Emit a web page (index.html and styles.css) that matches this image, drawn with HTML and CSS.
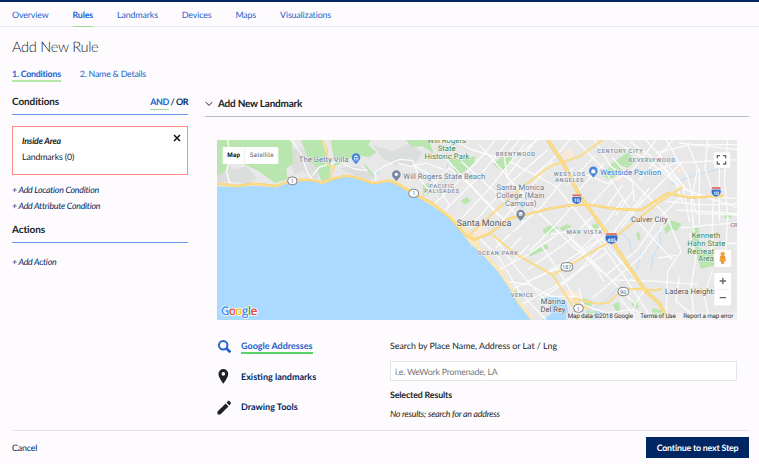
FILE: index.html
```html
<!DOCTYPE html>
<html lang="en">
<head>
<meta charset="utf-8">
<title>Add New Rule</title>
<link rel="stylesheet" href="styles.css">
</head>
<body>
<nav class="nav">
  <a>Overview</a><a class="current">Rules</a><a>Landmarks</a><a>Devices</a><a>Maps</a><a>Visualizations</a>
</nav>
<h1 class="title">Add New Rule</h1>
<div class="steps"><a class="current">1. Conditions</a><a>2. Name &amp; Details</a></div>
<div class="content">
  <aside class="sidebar">
    <div class="section-head"><h2>Conditions</h2><span class="logic"><a class="on">AND</a> / <a>OR</a></span></div>
    <div class="condition">
      <div><div class="condition-name">Inside Area</div><div>Landmarks (0)</div></div>
      <svg class="close" viewBox="0 0 8 8"><path d="M1 1l6 6M7 1L1 7"/></svg>
    </div>
    <a class="add">+ Add Location Condition</a>
    <a class="add">+ Add Attribute Condition</a>
    <div class="section-head actions"><h2>Actions</h2></div>
    <a class="add">+ Add Action</a>
  </aside>
  <main class="main">
    <div class="landmark-head"><svg viewBox="0 0 8 6"><path d="M.8 1.2L4 4.4l3.200-3.200"/></svg><h2>Add New Landmark</h2></div>
    <svg class="map" viewBox="3 6 1560 540">
      <rect class="land" x="3" y="6" width="1560" height="540"/>
      <g class="hill">
        <path d="M3 90l30-15 20 20 40-10 30 35-25 18-60-10-35 8zM215 60l25-35 40 20 40 60-20 20-40-25-25 10zM370 90l60-5 50 30-30 20-40-25zM470 20l60 20 50-25 40 30-30 40-50-5-40-20z"/>
      </g>
      <g class="park">
        <path d="M3 6h225l3 70-20 15 3 32-36 13-38-28-24-15-40-18-73 2zM255 6h60l8 22 22 50-5 47-24 4-14-42-28-30zM345 6h120l-8 15 24 22-20 14-45-5-25 15-35 18zM3 60l35 8-10 30-25 15z"/>
        <path d="M570 6h70l12 40 100 24-14 35-20-3-20-38-40-15-40-25-30 4zM722 92l25-32 32-5-6 20-30 28-24 6zM832 78l24-22 34 3-8 18-26 23zM620 140l17-6 5 30-20 12zM735 188l18-12 10 14-17 10z"/>
        <path d="M1185 78l50-35 25 25-25 22-22-10 10 18-42 27-18-10zM978 275l33-16 17 13-38 18zM1030 270l25-12 12 8-28 14zM933 345l57-28 8 14-56 24zM1125 262l20-7 3 15-16 3zM905 240l15-8 5 10-14 8zM1345 272l20-25 32 10-15 22-18-4-15 13zM1430 270h18v60l42 10 10 42-45 10-25-75zM1525 222h22v17h-22zM1260 286l10-3 5 20-8 5zM1100 480l30 10-6 18-18-3zM1190 500l18-8 5 25-10 7zM1245 492l16-6 7 22-14 6zM1310 510l34 10-3 18-34 2zM885 454l18 4-6 18-14-3zM440 75l12 8 20 28-6 3zM1110 520h40v26h-40zM1300 60l10-4 5 10-12 5z"/>
      </g>
      <g class="built"><path d="M780 262l25 5 15 20-28 12-25-10zM1050 455l28 5 20 18-28 12-20-10zM1385 92l16-2 5 12-20 4zM1200 115l15-3 4 15-16 2zM1035 50l28-20 12 20-17 20zM845 378l14 5 8 22-8 6zM1365 535l20-8 15 19h-30zM1320 180l12-8 10 15-12 6z"/></g>
      <g class="water"><path d="M977 480l45-2 30 14 8 54H980l30-22-25-4 20-17zM1140 516l-8 30h18l12-22z"/><path class="stream" d="M1110 520l50-22 45-48 60-60 10-50M670 180l15-40 12-70M1325 270l10 40-25 48-5 40M1360 140l80-30 90-22M480 98h8v10h-8zM1250 350l-12-45-28-28"/></g>
      <g class="street">
        <path d="M35 6l8 50-12 45 12 40M225 6l30 40 18 55 20 28M480 128l-2-26 28-18 45-20 40 4 20 55 35 42M290 112l20-25 35-10 40-15M385 78l30 15 40 5"/>
        <path d="M590 80l50 30 60 90M625 170l75-80 60 50 90 96M690 62l75 80 115 120M735 70l100 90 90 95M790 20l75 85 85 100 110 110 100 90M652 200l70-65 85-90 30-39M685 218l100-98 95-114M730 248l90-96 110-138M760 270l110-125 125-110"/>
        <path d="M545 75l38 10 50-10 50 20M710 6l60 30 60 18 75-5 60-43M910 6l-45 55 10 60 60 60M880 70l140 75 90 110 115 160 85 131M960 6l-90 112M1080 6l85 90 105 160 100 110M1135 6l50 80 65 45 5 60M1010 70l-85 100-85 100M1070 90l-95 118-85 74M1100 170l-80 90-80 80M1140 225l-90 90-115 80M1185 280l-110 90-140 60M1235 230l-75 95-100 100-90 60M1300 150l-70 85-60 75M1320 6l-70 90-75 40-75-30"/>
        <path d="M770 320l42 43 42 60 60 80M790 300l60 60 60 100 80 86M830 290l75 105 80 90M850 395l85-45 90-60M885 455l85-40 80-45 100-65M915 500l120-65 135-90M870 430l70 10 65 35h80M1005 290l40-8 55 50 65 100M975 320l60 90 40 70M1060 300l90 90 110 110M1120 260l85 100 85 98M1165 415l100-80 60-90 70-70M1185 425l140 5 120 10M1130 480l140-120 70-95M1190 60l70 80 90 90 45 110-40 60-5 130M1240 10l85 60 55 65 20 60"/>
        <path d="M1190 6l100 58 115 90 158 55M1290 6l50 55 60 80 20 110M1350 6l65 110 25 110 123 5M1320 45l100-25 143 0M1280 110l100-35 183-10M1415 20l30 70-20 100 10 100M1475 6l-8 85 25 80-5 170M1535 6l-10 110 10 120-8 150M1350 190l100 10 113-2M1380 216l183 10M1395 270l95-10 73-5M1485 320l78-5M1420 285l20 70-15 90 10 101M1490 395l-25 80 15 71M1325 360l55-8M1090 450l10 50 70 25 80-10 80 31M1210 480l35 40 10 26M1290 450l-30 40-15 56M1390 415l-10 75 70 56M840 330l45-45M865 350l50-50M890 370l50-50M1085 340l35-30 60-70 45-60"/>
        <path d="M1140 50l-85 90M1165 75l-85 90M1060 6l-35 42-70 65M1190 130l-65 70M1220 140l-50 70M1250 160l-50 70M1280 185l-65 85M1370 6l-100 120M1400 70l-60 60-90 90M1340 85l75 70M1390 15l173 20M1380 170l80 5 103 6M1450 90v170M1510 90v160"/>
      </g>
      <path class="beach-line" d="M520 132L545 142 590 169 650 205 700 240 735 280 760 315 790 340 845 400 880 450 905 495 945 546"/>
      <path class="beach" d="M3 143l110-3 68 3 46-16 62-3 31 7 25-10 45-11 40 7 40 13 50-4-50 12-40-14-40-4-45 14-25 12-31-11-62 4-46 18-68-2-110 2zM720 245l40 35 25 20 10 40-35-20z"/>
      <path class="sea" d="M3 145l60 2 50-4 68 5 46-17 62-3 31 11 25-12 45-12 40 7 40 16 50-6 25 10L590 169 650 205 700 240 735 280 760 315 790 340 845 400 880 450 905 495 945 546H3z"/>
      <path class="pier" d="M775 315l-13 13M772 315l-3 10"/>
      <g class="road-edge">
        <path d="M3 136l60 8 50-7 68 7 46-18 50-1 45 9 23-10 45-11 40 8 40 15 50-8 25 10 45 28 60 30 50 42 50 55 25 12 45-18 60-45 50-12 70-18 60-10 60-2 80 13 75 3 80-50 70 13 96-5" class="main"/>
        <path d="M995 6l50 75 45 90 80 110 65 100 55 80 40 35 25 50" class="main freeway"/>
        <path d="M317 6l15 25 4 50 18 6-8 20v17M762 290l75-70 85-75 80-60 90-30 75-55M828 290l75 60 106 60 62 95M1009 412l170-100 145-115 75-50M1071 482l70 15 35-2 43-40 64-3 30 6 25-6M1071 490l50 24" class="minor"/>
      </g>
      <g class="road">
        <path d="M3 136l60 8 50-7 68 7 46-18 50-1 45 9 23-10 45-11 40 8 40 15 50-8 25 10 45 28 60 30 50 42 50 55 25 12 45-18 60-45 50-12 70-18 60-10 60-2 80 13 75 3 80-50 70 13 96-5" class="main"/>
        <path d="M995 6l50 75 45 90 80 110 65 100 55 80 40 35 25 50" class="main freeway"/>
        <path d="M317 6l15 25 4 50 18 6-8 20v17M762 290l75-70 85-75 80-60 90-30 75-55M828 290l75 60 106 60 62 95M1009 412l170-100 145-115 75-50M1071 482l70 15 35-2 43-40 64-3 30 6 25-6M1071 490l50 24" class="minor"/>
      </g>
      <g class="shield">
        <rect x="215" y="117" width="28" height="23" rx="11"/><rect x="578" y="154" width="30" height="24" rx="12"/><rect x="1035" y="374" width="35" height="25" rx="11"/><rect x="1206" y="448" width="32" height="25" rx="12"/><rect x="1073" y="499" width="29" height="24" rx="12"/>
        <text x="229" y="135">1</text><text x="593" y="172">1</text><text x="1052" y="393">187</text><text x="1222" y="467">90</text><text x="1087" y="518">1</text>
      </g>
      <g class="interstate">
        <path d="M1069 176h27q5 17-14 23-18-6-13-23zM1487 154h27q5 17-14 23-18-6-13-23zM1169 291h35q8 20-18 28-24-8-17-28z"/>
        <path class="red" d="M1069 169h27v6h-27zM1487 147h27v6h-27zM1170 285h33v6h-33z"/>
        <text x="1082" y="193">10</text><text x="1500" y="171">10</text><text x="1187" y="311">405</text>
      </g>
      <g class="pins">
        <path class="blue" d="M420 79l-9-11a13 13 0 1 1 18 0z"/><path class="icon" d="M413 57l7-5 7 5zM414 59h3v5h-3zM419 59h3v5h-3zM424 59h3v5h-3zM413 65h15v2h-15z"/>
        <path d="M541 130l-9-11a13 13 0 1 1 18 0z"/><circle class="icon" cx="541" cy="109" r="5"/>
        <path class="blue" d="M1132 119l-9-11a13 13 0 1 1 18 0z"/><path class="icon" d="M1126 97h12v9h-12zM1129 97v-3h6v3h-2v-1h-2v1z"/>
        <path d="M914 249l-9-11a13 13 0 1 1 18 0z"/><path class="icon" d="M906 226l8-4 8 4-8 4zM909 229l5 3 5-3v4h-10z"/>
      </g>
      <g class="label green">
        <text x="692" y="16" textLength="116">Will Rogers</text><text x="692" y="38" textLength="54">State</text><text x="693" y="62" textLength="135">Historic Park</text>
        <text x="1470" y="301" textLength="86">Kenneth</text><text x="1471" y="324" textLength="114">Hahn State</text><text x="1470" y="347" textLength="112">Recreation</text><text x="1470" y="370" textLength="46">Area</text>
      </g>
      <g class="label slate">
        <text x="323" y="71" textLength="149">The Getty Villa</text><text x="685" y="124" textLength="246">Will Rogers State Beach</text>
        <text x="913" y="157" textLength="143">Santa Monica</text><text x="913" y="181" textLength="144">College (Main</text><text x="914" y="204" textLength="94">Campus)</text>
        <text class="bluetext" x="1244" y="111" textLength="183">Westside Pavilion</text>
      </g>
      <g class="label area">
        <text x="898" y="54" textLength="117">BRENTWOOD</text><text x="677" y="150" textLength="74">PACIFIC</text><text x="677" y="166" textLength="104">PALISADES</text>
        <text x="1212" y="45" textLength="136">CENTURY CITY</text><text x="1307" y="71" textLength="139">BEVERLYWOOD</text><text x="1060" y="115" textLength="93">WEST LOS</text><text x="1060" y="131" textLength="85">ANGELES</text>
        <text x="1105" y="288" textLength="105">MAR VISTA</text><text x="845" y="350" textLength="121">OCEAN PARK</text><text x="918" y="478" textLength="67">VENICE</text><text x="1554" y="268">CR</text>
      </g>
      <g class="label city">
        <text class="large" x="804" y="264" textLength="164">Santa Monica</text><text x="1300" y="252" textLength="110">Culver City</text><text x="1011" y="498" textLength="73">Marina</text><text x="1011" y="521" textLength="75">Del Rey</text><text x="1425" y="467" textLength="156">Ladera Heights</text>
      </g>
      <rect class="credit-bg" x="1050" y="524" width="513" height="22"/>
      <g class="credit"><text x="1153" y="539" textLength="196">Map data ©2018 Google</text><text x="1326" y="539" textLength="107">Terms of Use</text><text x="1477" y="539" textLength="150">Report a map error</text></g>
      <text class="google" x="69" y="531" textLength="110"><tspan class="g-blue">G</tspan><tspan class="g-red">o</tspan><tspan class="g-yellow">o</tspan><tspan class="g-blue">g</tspan><tspan class="g-green">l</tspan><tspan class="g-red">e</tspan></text>
      <g class="control">
        <rect x="20" y="27" width="167" height="51" rx="3"/><path class="divider" d="M86 27v51"/>
        <text class="selected" x="53" y="57" textLength="38">Map</text><text x="137" y="57" textLength="72">Satellite</text>
        <rect x="1494" y="43" width="48" height="46" rx="3"/><path class="full" d="M1504 61v-8h8M1521 53h8v8M1529 70v8h-8M1512 78h-8v-8"/>
        <rect x="1495" y="336" width="50" height="51" rx="3"/><path class="person" d="M1513 356q7-6 14 0l2 13h-4l-2 8h-6l-2-8h-4z"/><circle class="person" cx="1520" cy="348" r="6"/><path class="person-line" d="M1513 356q7 5 14 0M1518 370v7"/>
        <rect x="1495" y="405" width="50" height="97" rx="3"/><path class="divider" d="M1502 454h36"/><path class="zoom" d="M1511 429h19M1520.500 419.500v19M1511 479h19"/>
      </g>
    </svg>
    <div class="lookup">
      <div class="sources">
        <a class="current"><svg viewBox="0 0 14 14"><circle cx="6.200" cy="5.700" r="4.200" fill="none" stroke="currentColor" stroke-width="2"/><path d="M9.300 8.800l4 4" stroke="currentColor" stroke-width="2.700"/></svg><span>Google Addresses</span></a>
        <a><svg viewBox="0 0 14 16"><path fill-rule="evenodd" d="M6.300 0a5.200 5.200 0 0 1 5.200 5.200c0 3.800-5.200 10.300-5.200 10.300S1.100 9 1.100 5.200A5.200 5.200 0 0 1 6.300 0zm0 3.300a1.900 1.900 0 1 0 0 3.800 1.900 1.900 0 0 0 0-3.800z"/></svg><span>Existing landmarks</span></a>
        <a><svg viewBox="0 0 14 14"><path d="M.5 11.100l8.100-8.100 2.900 2.900-8.100 8.100H.5zM9.500 2.100L11.200.4q.6-.6 1.200 0l1.300 1.700q.6.600 0 1.200L12.400 5z"/></svg><span>Drawing Tools</span></a>
      </div>
      <div class="search">
        <label for="place">Search by Place Name, Address or Lat / Lng</label>
        <input id="place" placeholder="i.e. WeWork Promenade, LA">
        <strong>Selected Results</strong>
        <em>No results; search for an address</em>
      </div>
    </div>
  </main>
</div>
<footer class="footer"><a>Cancel</a><button>Continue to next Step</button></footer>
</body>
</html>
```
FILE: styles.css
```css
* { box-sizing: border-box; }
body { margin: 0; height: 464px; overflow: hidden; background: #fdfbfd; color: #202124; font: 8.8px/12px Lato, sans-serif; letter-spacing: -.12px; text-rendering: geometricPrecision; }
h1, h2 { margin: 0; }
.nav { height: 27px; border-top: 2px solid #002663; border-bottom: 1px solid #e8e8ea; padding-left: 12px; display: flex; gap: 24px; color: #2462ce; }
.nav a { height: 25px; padding-top: 7px; }
.nav .current { font-weight: 700; border-bottom: 1px solid #9edb91; }
.title { margin: 12px 12px 0; font-size: 14.600px; letter-spacing: -.3px; line-height: 18px; font-weight: 300; }
.steps { margin: 10px 12px 0; height: 15px; display: flex; gap: 19px; color: #2462ce; letter-spacing: -.22px; }
.steps a { padding-top: 1px; height: 15px; }
.steps .current { font-weight: 700; height: 15px; border-bottom: 2px solid #b4e6a8; }
.content { margin: 0 10px 0 12px; display: flex; gap: 17px; height: 348px; }
.sidebar { width: 176px; padding-top: 13px; }
.section-head { height: 20px; display: flex; justify-content: space-between; border-bottom: 1px solid #6796e4; }
h2 { font-size: 10px; line-height: 14px; font-weight: 700; letter-spacing: -.1px; }
.logic { color: #002b6b; padding-top: 1px; height: 15px; font-weight: 700; font-size: 9px; letter-spacing: -.5px; }
.logic .on { color: #2462ce; display: inline-block; border-bottom: 1px solid #9edb91; height: 14px; }
.condition { height: 49px; margin: 11px 0 7px; padding: 7px 6px 0 9px; border: 1px solid #ff8b82; background: white; display: flex; justify-content: space-between; line-height: 16px; }
.condition-name { font-style: italic; font-weight: 700; line-height: 13px; letter-spacing: -.2px; }
.condition-name + div { line-height: 19px; }
.close { width: 8px; height: 8px; fill: none; stroke: #111; stroke-width: 1.500; }
.add { display: block; line-height: 16px; font-style: italic; color: #002663; letter-spacing: -.24px; }
.actions { margin: 9px 0 11px; }
.main { width: 544px; padding-top: 15px; }
.landmark-head { height: 20px; display: flex; gap: 5px; border-bottom: 1px solid #b9bdc0; }
.landmark-head svg { width: 8px; height: 6px; margin-top: 4px; fill: none; stroke: #222; }
.landmark-head h2 { letter-spacing: -.23px; }
.map { display: block; width: 520px; height: 180px; margin: 23px 12px 0; overflow: hidden; letter-spacing: 0; }
.lookup { margin: 0 12px; display: flex; }
.sources { width: 173px; padding-top: 11px; font-size: 9px; letter-spacing: 0; }
.sources a { display: flex; align-items: center; gap: 10px; height: 30.500px; font-weight: 700; color: #002663; }
.sources svg { width: 14px; height: 15px; fill: #202124; }
.sources .current, .sources .current svg { color: #2462ce; }
.sources .current span { border-bottom: 2px solid #5ad46a; padding-top: 2px; }
.search { width: 347px; padding-top: 20px; }
.search label { display: block; letter-spacing: 0; }
.search input { display: block; width: 347px; height: 20px; margin: 9px 0 8px; padding: 0 4px; border: 1px solid #e5e5e9; background: white; font: 8.8px Lato, sans-serif; letter-spacing: -.22px; text-rendering: inherit; }
.search input::placeholder { color: #777; opacity: 1; }
.search strong, .search em { display: block; }
.search em { margin-top: 7px; letter-spacing: -.25px; }
.footer { height: 34px; margin: 0 10px 0 12px; border-top: 1px solid #e5e5e9; display: flex; justify-content: space-between; padding-top: 6px; color: #002663; line-height: 21px; }
.footer button { width: 103px; height: 21px; padding: 0; border: 0; background: #002663; color: white; font: 700 8.8px Lato, sans-serif; letter-spacing: -.19px; text-rendering: inherit; }
.map text { font-family: Roboto, sans-serif; text-anchor: middle; }
.land { fill: #e8e8e8; }
.hill { fill: #dcdddd; }
.park { fill: #b9e5ae; }
.built { fill: #fae8d9; }
.sea, .water { fill: #aadaff; }
.beach { fill: #fbe8b8; }
.beach-line { fill: none; stroke: #fbe8b8; stroke-width: 20; }
.pier { stroke: #e8e8e8; stroke-width: 3; }
.stream { fill: none; stroke: #aadaff; stroke-width: 2; }
.street { fill: none; stroke: #fbfbfb; stroke-width: 4; stroke-linejoin: round; }
.road-edge, .road { fill: none; stroke-linejoin: round; }
.road-edge { stroke: #f5cd6b; }
.road { stroke: #ffdf89; }
.road-edge .main { stroke-width: 7; }
.road-edge .minor { stroke-width: 5; }
.road-edge .freeway { stroke-width: 10; }
.road .main, .road .minor { stroke-width: 4; }
.road .freeway { stroke-width: 6; }
.shield rect { fill: white; stroke: #7b7d80; stroke-width: 3; }
.shield text { font-size: 16px; fill: #555; }
.interstate { fill: #366dc5; stroke: white; stroke-width: 1; }
.interstate .red { fill: #df604f; }
.interstate text { font-size: 15px; font-weight: 700; fill: white; stroke: none; }
.pins { fill: #76899e; }
.pins .blue { fill: #4586dc; }
.pins .icon { fill: white; }
.label { font-size: 23px; paint-order: stroke; stroke: #f5f5f5; stroke-width: 3; stroke-linejoin: round; }
.green { fill: #398448; }
.slate { fill: #65798e; }
.bluetext { fill: #3974d2; }
.area { font-size: 17px; font-weight: 500; fill: #78889b; }
.city { fill: #555; }
.label .large { font-size: 27px; }
.credit-bg { fill: #f5f5f5; opacity: .65; }
.credit { font-size: 19px; fill: #333; }
.map .google { font: 600 36px "Open Sans", sans-serif; paint-order: stroke; stroke: #f5f8fa; stroke-width: 5; }
.g-blue { fill: #4285f4; }
.g-red { fill: #ea4335; }
.g-yellow { fill: #fbbc05; }
.g-green { fill: #34a853; }
.control rect { fill: white; }
.control text { font-size: 19px; fill: #606060; }
.control .selected { font-weight: 700; fill: #111; }
.divider { stroke: #e6e6e6; stroke-width: 2; }
.full, .zoom { fill: none; stroke: #666; stroke-width: 4; }
.person { fill: #f4a52f; stroke: #d47c27; stroke-width: 1; }
.person-line { fill: none; stroke: #c57022; stroke-width: 2; }
```
